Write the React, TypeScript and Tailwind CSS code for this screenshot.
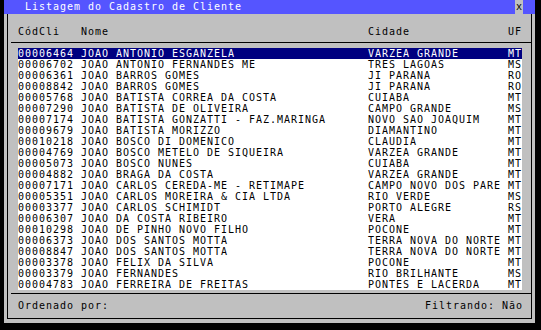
import * as React from "react"

type Cliente = { cod: string; nome: string; cidade: string; uf: string }

const clientes: Cliente[] = [
  { cod: "00006464", nome: "JOAO ANTONIO ESGANZELA", cidade: "VARZEA GRANDE", uf: "MT" },
  { cod: "00006702", nome: "JOAO ANTONIO FERNANDES ME", cidade: "TRES LAGOAS", uf: "MS" },
  { cod: "00006361", nome: "JOAO BARROS GOMES", cidade: "JI PARANA", uf: "RO" },
  { cod: "00008842", nome: "JOAO BARROS GOMES", cidade: "JI PARANA", uf: "RO" },
  { cod: "00005768", nome: "JOAO BATISTA CORREA DA COSTA", cidade: "CUIABA", uf: "MT" },
  { cod: "00007290", nome: "JOAO BATISTA DE OLIVEIRA", cidade: "CAMPO GRANDE", uf: "MS" },
  { cod: "00007174", nome: "JOAO BATISTA GONZATTI - FAZ.MARINGA", cidade: "NOVO SAO JOAQUIM", uf: "MT" },
  { cod: "00009679", nome: "JOAO BATISTA MORIZZO", cidade: "DIAMANTINO", uf: "MT" },
  { cod: "00010218", nome: "JOAO BOSCO DI DOMENICO", cidade: "CLAUDIA", uf: "MT" },
  { cod: "00004769", nome: "JOAO BOSCO METELO DE SIQUEIRA", cidade: "VARZEA GRANDE", uf: "MT" },
  { cod: "00005073", nome: "JOAO BOSCO NUNES", cidade: "CUIABA", uf: "MT" },
  { cod: "00004882", nome: "JOAO BRAGA DA COSTA", cidade: "VARZEA GRANDE", uf: "MT" },
  { cod: "00007171", nome: "JOAO CARLOS CEREDA-ME - RETIMAPE", cidade: "CAMPO NOVO DOS PARE", uf: "MT" },
  { cod: "00005351", nome: "JOAO CARLOS MOREIRA & CIA LTDA", cidade: "RIO VERDE", uf: "MS" },
  { cod: "00003377", nome: "JOAO CARLOS SCHIMIDT", cidade: "PORTO ALEGRE", uf: "RS" },
  { cod: "00006307", nome: "JOAO DA COSTA RIBEIRO", cidade: "VERA", uf: "MT" },
  { cod: "00010298", nome: "JOAO DE PINHO NOVO FILHO", cidade: "POCONE", uf: "MT" },
  { cod: "00006373", nome: "JOAO DOS SANTOS MOTTA", cidade: "TERRA NOVA DO NORTE", uf: "MT" },
  { cod: "00008847", nome: "JOAO DOS SANTOS MOTTA", cidade: "TERRA NOVA DO NORTE", uf: "MT" },
  { cod: "00003378", nome: "JOAO FELIX DA SILVA", cidade: "POCONE", uf: "MT" },
  { cod: "00003379", nome: "JOAO FERNANDES", cidade: "RIO BRILHANTE", uf: "MS" },
  { cod: "00004783", nome: "JOAO FERREIRA DE FREITAS", cidade: "PONTES E LACERDA", uf: "MT" },
]

function Row({ c, selected }: { c: Cliente; selected: boolean }) {
  return (
    <div className={`flex h-[11px] whitespace-pre leading-[11px] ${selected ? "bg-[#000080] text-white" : "text-black"}`}>
      <span className="w-[63px] shrink-0">{c.cod}</span>
      <span className="w-[287px] shrink-0">{c.nome}</span>
      <span className="w-[140px] shrink-0">{c.cidade}</span>
      <span className="w-[14px] shrink-0">{c.uf}</span>
    </div>
  )
}

export default function App() {
  return (
    <div className="h-[330px] w-[541px] overflow-hidden bg-black font-['DejaVu_Sans_Mono',monospace] text-[10px] tracking-[0.98px]">
      <div className="ml-[4px] flex h-[323px] w-[531px] flex-col bg-[#c0c0c0]">
        {/* Title bar */}
        <div className="flex h-[14px] shrink-0 bg-[#5555ff] leading-[14px]">
          <span className="whitespace-pre pl-[21px] text-white">Listagem do Cadastro de Cliente</span>
          <div className="flex-1" />
          <span className="flex w-[8px] items-center justify-center bg-[#c0c0c0] tracking-normal text-black">x</span>
          <div className="w-[12px]" />
        </div>

        {/* Frame */}
        <div className="ml-[3px] flex h-[305px] w-[525px] flex-col border-x border-b border-black">
          <div className="flex h-[28px] whitespace-pre pl-[10px] pt-[12px] leading-[11px] text-black">
            <span className="w-[63px]">CódCli</span>
            <span className="w-[287px]">Nome</span>
            <span className="w-[140px]">Cidade</span>
            <span className="w-[14px]">UF</span>
          </div>
          <div className="ml-[3px] h-px bg-black" />

          <div className="ml-[10px] mt-[5px] h-[242px] w-[504px] bg-white">
            {clientes.map((c, i) => (
              <Row key={c.cod} c={c} selected={i === 0} />
            ))}
          </div>

          <div className="ml-[3px] mt-[3px] h-px bg-black" />
          <div className="flex h-[24px] justify-between whitespace-pre pl-[10px] pr-[8px] pt-[6px] leading-[11px] text-black">
            <span>Ordenado por:</span>
            <span>Filtrando: Não</span>
          </div>
        </div>
      </div>
    </div>
  )
}
